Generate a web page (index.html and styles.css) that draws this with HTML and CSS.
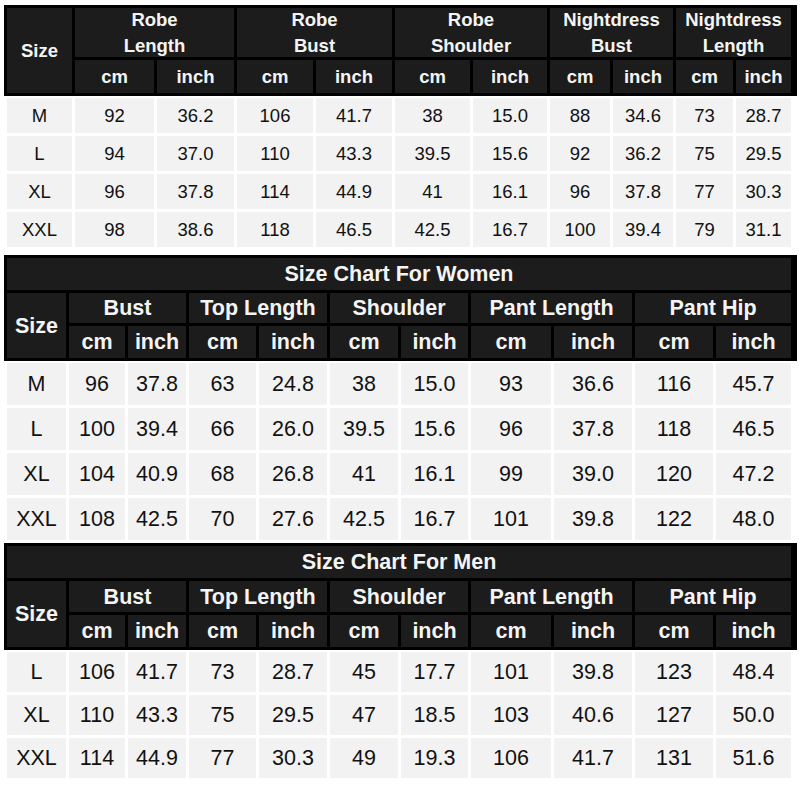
FILE: index.html
```html
<!DOCTYPE html>
<html lang="en">
<head>
<meta charset="utf-8">
<title>Size Chart</title>
<link rel="stylesheet" href="styles.css">
</head>
<body>
<main class="page">
  <section class="chart chart-robe">
    <div class="head">
      <div class="h size">Size</div>
      <div class="h grp">Robe<br>Length</div>
      <div class="h grp">Robe<br>Bust</div>
      <div class="h grp">Robe<br>Shoulder</div>
      <div class="h grp">Nightdress<br>Bust</div>
      <div class="h grp">Nightdress<br>Length</div>
      <div class="h">cm</div><div class="h">inch</div>
      <div class="h">cm</div><div class="h">inch</div>
      <div class="h">cm</div><div class="h">inch</div>
      <div class="h">cm</div><div class="h">inch</div>
      <div class="h">cm</div><div class="h">inch</div>
    </div>
    <div class="body">
      <div class="c">M</div><div class="c">92</div><div class="c">36.2</div><div class="c">106</div><div class="c">41.7</div><div class="c">38</div><div class="c">15.0</div><div class="c">88</div><div class="c">34.6</div><div class="c">73</div><div class="c">28.7</div>
      <div class="c">L</div><div class="c">94</div><div class="c">37.0</div><div class="c">110</div><div class="c">43.3</div><div class="c">39.5</div><div class="c">15.6</div><div class="c">92</div><div class="c">36.2</div><div class="c">75</div><div class="c">29.5</div>
      <div class="c">XL</div><div class="c">96</div><div class="c">37.8</div><div class="c">114</div><div class="c">44.9</div><div class="c">41</div><div class="c">16.1</div><div class="c">96</div><div class="c">37.8</div><div class="c">77</div><div class="c">30.3</div>
      <div class="c">XXL</div><div class="c">98</div><div class="c">38.6</div><div class="c">118</div><div class="c">46.5</div><div class="c">42.5</div><div class="c">16.7</div><div class="c">100</div><div class="c">39.4</div><div class="c">79</div><div class="c">31.1</div>
    </div>
  </section>

  <section class="chart chart-set chart-women">
    <div class="head">
      <div class="h title">Size Chart For Women</div>
      <div class="h size">Size</div>
      <div class="h grp">Bust</div>
      <div class="h grp">Top Length</div>
      <div class="h grp">Shoulder</div>
      <div class="h grp">Pant Length</div>
      <div class="h grp">Pant Hip</div>
      <div class="h">cm</div><div class="h">inch</div>
      <div class="h">cm</div><div class="h">inch</div>
      <div class="h">cm</div><div class="h">inch</div>
      <div class="h">cm</div><div class="h">inch</div>
      <div class="h">cm</div><div class="h">inch</div>
    </div>
    <div class="body">
      <div class="c">M</div><div class="c">96</div><div class="c">37.8</div><div class="c">63</div><div class="c">24.8</div><div class="c">38</div><div class="c">15.0</div><div class="c">93</div><div class="c">36.6</div><div class="c">116</div><div class="c">45.7</div>
      <div class="c">L</div><div class="c">100</div><div class="c">39.4</div><div class="c">66</div><div class="c">26.0</div><div class="c">39.5</div><div class="c">15.6</div><div class="c">96</div><div class="c">37.8</div><div class="c">118</div><div class="c">46.5</div>
      <div class="c">XL</div><div class="c">104</div><div class="c">40.9</div><div class="c">68</div><div class="c">26.8</div><div class="c">41</div><div class="c">16.1</div><div class="c">99</div><div class="c">39.0</div><div class="c">120</div><div class="c">47.2</div>
      <div class="c">XXL</div><div class="c">108</div><div class="c">42.5</div><div class="c">70</div><div class="c">27.6</div><div class="c">42.5</div><div class="c">16.7</div><div class="c">101</div><div class="c">39.8</div><div class="c">122</div><div class="c">48.0</div>
    </div>
  </section>

  <section class="chart chart-set chart-men">
    <div class="head">
      <div class="h title">Size Chart For Men</div>
      <div class="h size">Size</div>
      <div class="h grp">Bust</div>
      <div class="h grp">Top Length</div>
      <div class="h grp">Shoulder</div>
      <div class="h grp">Pant Length</div>
      <div class="h grp">Pant Hip</div>
      <div class="h">cm</div><div class="h">inch</div>
      <div class="h">cm</div><div class="h">inch</div>
      <div class="h">cm</div><div class="h">inch</div>
      <div class="h">cm</div><div class="h">inch</div>
      <div class="h">cm</div><div class="h">inch</div>
    </div>
    <div class="body">
      <div class="c">L</div><div class="c">106</div><div class="c">41.7</div><div class="c">73</div><div class="c">28.7</div><div class="c">45</div><div class="c">17.7</div><div class="c">101</div><div class="c">39.8</div><div class="c">123</div><div class="c">48.4</div>
      <div class="c">XL</div><div class="c">110</div><div class="c">43.3</div><div class="c">75</div><div class="c">29.5</div><div class="c">47</div><div class="c">18.5</div><div class="c">103</div><div class="c">40.6</div><div class="c">127</div><div class="c">50.0</div>
      <div class="c">XXL</div><div class="c">114</div><div class="c">44.9</div><div class="c">77</div><div class="c">30.3</div><div class="c">49</div><div class="c">19.3</div><div class="c">106</div><div class="c">41.7</div><div class="c">131</div><div class="c">51.6</div>
    </div>
  </section>
</main>
</body>
</html>
```
FILE: styles.css
```css
html, body {
  margin: 0;
  padding: 0;
  background: #ffffff;
}

body {
  font-family: "Liberation Sans", Arial, sans-serif;
  color: #111111;
}

.page {
  width: 793px;
  padding: 5px 0 0 4px;
  display: flex;
  flex-direction: column;
}

.chart {
  display: flex;
  flex-direction: column;
}

.head,
.body {
  display: grid;
  column-gap: 3px;
  row-gap: 3px;
  padding: 3px;
}

.head {
  background: #000000;
}

.body {
  background: #ffffff;
  padding: 2px 3px;
}

.chart-robe .head,
.chart-robe .body {
  grid-template-columns: 65px 79px 77px 76px 76px 75px 74px 60px 60px 57px 55px;
}

.chart-set .head,
.chart-set .body {
  grid-template-columns: 59px 56px 58px 67px 68px 68px 67px 80px 78px 78px 75px;
}

.chart-robe .head {
  grid-template-rows: 49px 33px;
  font-size: 18.5px;
}

.chart-robe .body {
  grid-auto-rows: 35px;
  font-size: 18.5px;
}

.chart-women {
  margin-top: 6px;
}

.chart-men {
  margin-top: 1px;
}

.chart-women .head {
  grid-template-rows: 32px 30px 32px;
}

.chart-men .head {
  grid-template-rows: 32px 31px 32px;
}

.chart-set .head,
.chart-set .body {
  font-size: 21.5px;
}

.chart-women .body {
  grid-auto-rows: 42px;
}

.chart-men .body {
  grid-auto-rows: 40px;
}

.h {
  background: #1c1c1c;
  color: #f4f4f4;
  font-weight: bold;
  display: flex;
  align-items: center;
  justify-content: center;
  text-align: center;
  line-height: 26px;
}

.h.size {
  grid-row: span 2;
}

.h.grp {
  grid-column: span 2;
}

.h.title {
  grid-column: 1 / -1;
}

.c {
  background: #f2f2f2;
  display: flex;
  align-items: center;
  justify-content: center;
  text-align: center;
}
```
